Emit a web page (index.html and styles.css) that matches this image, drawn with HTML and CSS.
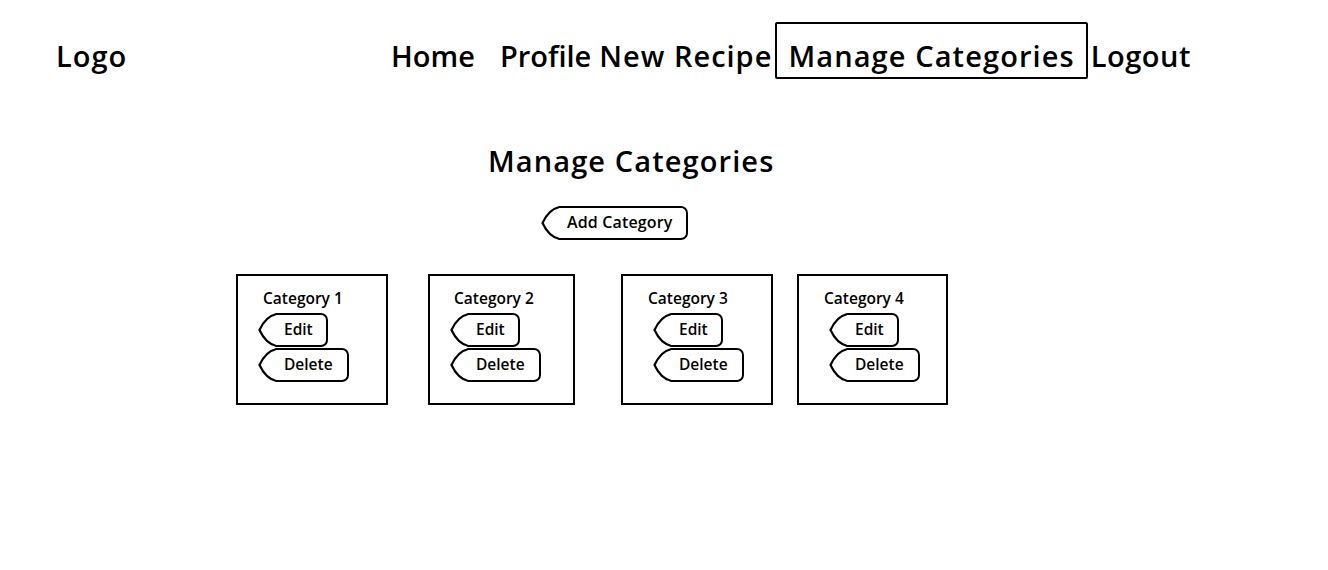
FILE: index.html
```html
<!DOCTYPE html>
<html>
<head>
<meta charset="utf-8">
<link rel="stylesheet" href="styles.css">
</head>
<body>
<header class="topbar">
  <div class="logo">Logo</div>
  <nav class="nav">
    <a class="nav-item home">Home</a>
    <a class="nav-item profile">Profile</a>
    <a class="nav-item recipe">New Recipe</a>
    <a class="nav-item active">Manage Categories</a>
    <a class="nav-item logout">Logout</a>
  </nav>
</header>
<main class="main">
  <h1 class="title">Manage Categories</h1>
  <div class="add-row">
    <button class="tag-btn big">
      <svg class="tip" viewBox="0 0 18 34" width="18" height="34"><path d="M19 1 Q8 3 1.5 17 Q8 31 19 33" fill="none" stroke="#000" stroke-width="2.2" stroke-linecap="round"/></svg>
      <span class="tag-body">Add Category</span>
    </button>
  </div>
  <section class="cards">
    <div class="card c1">
      <div class="card-name">Category 1</div>
      <button class="tag-btn"><svg class="tip" viewBox="0 0 18 34" width="18" height="34"><path d="M19 1 Q8 3 1.5 17 Q8 31 19 33" fill="none" stroke="#000" stroke-width="2.2" stroke-linecap="round"/></svg><span class="tag-body edit">Edit</span></button>
      <button class="tag-btn"><svg class="tip" viewBox="0 0 18 34" width="18" height="34"><path d="M19 1 Q8 3 1.5 17 Q8 31 19 33" fill="none" stroke="#000" stroke-width="2.2" stroke-linecap="round"/></svg><span class="tag-body del">Delete</span></button>
    </div>
    <div class="card c2">
      <div class="card-name">Category 2</div>
      <button class="tag-btn"><svg class="tip" viewBox="0 0 18 34" width="18" height="34"><path d="M19 1 Q8 3 1.5 17 Q8 31 19 33" fill="none" stroke="#000" stroke-width="2.2" stroke-linecap="round"/></svg><span class="tag-body edit">Edit</span></button>
      <button class="tag-btn"><svg class="tip" viewBox="0 0 18 34" width="18" height="34"><path d="M19 1 Q8 3 1.5 17 Q8 31 19 33" fill="none" stroke="#000" stroke-width="2.2" stroke-linecap="round"/></svg><span class="tag-body del">Delete</span></button>
    </div>
    <div class="card c3">
      <div class="card-name">Category 3</div>
      <button class="tag-btn"><svg class="tip" viewBox="0 0 18 34" width="18" height="34"><path d="M19 1 Q8 3 1.5 17 Q8 31 19 33" fill="none" stroke="#000" stroke-width="2.2" stroke-linecap="round"/></svg><span class="tag-body edit">Edit</span></button>
      <button class="tag-btn"><svg class="tip" viewBox="0 0 18 34" width="18" height="34"><path d="M19 1 Q8 3 1.5 17 Q8 31 19 33" fill="none" stroke="#000" stroke-width="2.2" stroke-linecap="round"/></svg><span class="tag-body del">Delete</span></button>
    </div>
    <div class="card c4">
      <div class="card-name">Category 4</div>
      <button class="tag-btn"><svg class="tip" viewBox="0 0 18 34" width="18" height="34"><path d="M19 1 Q8 3 1.5 17 Q8 31 19 33" fill="none" stroke="#000" stroke-width="2.2" stroke-linecap="round"/></svg><span class="tag-body edit">Edit</span></button>
      <button class="tag-btn"><svg class="tip" viewBox="0 0 18 34" width="18" height="34"><path d="M19 1 Q8 3 1.5 17 Q8 31 19 33" fill="none" stroke="#000" stroke-width="2.2" stroke-linecap="round"/></svg><span class="tag-body del">Delete</span></button>
    </div>
  </section>
</main>
</body>
</html>
```

FILE: styles.css
```css
* { box-sizing: border-box; }
body {
  margin: 0;
  background: #fff;
  color: #000;
  font-family: "Open Sans", "Liberation Sans", sans-serif;
  font-weight: 600;
}
.topbar {
  display: flex;
  align-items: flex-start;
  height: 57px;
  margin-top: 22px;
  padding-left: 56px;
}
.logo {
  font-size: 29px;
  line-height: 40px;
  padding-top: 14px;
  width: 335px;
  letter-spacing: 1px;
}
.nav {
  display: flex;
  align-items: flex-start;
  height: 57px;
}
.nav-item {
  font-size: 29px;
  line-height: 40px;
  padding-top: 14px;
  color: #000;
  text-decoration: none;
  margin-right: 3px;
  white-space: nowrap;
}
.nav-item.home { margin-right: 25px; }
.nav-item.profile { margin-right: 8px; }
.nav-item.recipe { letter-spacing: 1px; }
.nav-item.logout { letter-spacing: 0.5px; }
.nav-item.active {
  height: 57px;
  padding: 12px 11px 0 11px;
  border: 2px solid #000;
  border-radius: 2px;
  letter-spacing: 1.1px;
}
.main { display: flex; flex-direction: column; }
.title {
  margin: 64px 0 0 488px;
  font-size: 29px;
  font-weight: 600;
  line-height: 36px;
  letter-spacing: 1.1px;
}
.add-row {
  margin: 27px 0 0 541px;
}
.tag-btn {
  display: flex;
  align-items: stretch;
  height: 34px;
  padding: 0;
  margin: 0;
  border: none;
  background: transparent;
  font-family: inherit;
  font-weight: 600;
  color: #000;
  cursor: pointer;
}
.tip { display: block; flex: none; }
.tag-body {
  display: flex;
  align-items: center;
  border: 2.2px solid #000;
  border-left: none;
  border-radius: 0 7px 7px 0;
  font-size: 15.5px;
  padding: 0 10px 2px 8px;
}
.tag-body.edit { width: 52px; }
.tag-body.del { width: 73px; }
.big .tag-body { padding: 0 13px 2px 8px; font-size: 16px; letter-spacing: 0.15px; }
.cards {
  display: flex;
  margin: 34px 0 0 236px;
}
.card {
  width: 152px;
  height: 131px;
  border: 2.2px solid #000;
  padding: 12px 0 0 20px;
  display: flex;
  flex-direction: column;
}
.card-name {
  font-size: 15.5px;
  line-height: 20px;
  margin: 0 0 5px 5px;
}
.card .tag-btn + .tag-btn { margin-top: 1px; }
.c2 { width: 147px; margin-left: 40px; padding-left: 20px; }
.c2 .card-name { margin-left: 4px; }
.c3 { margin-left: 46px; padding-left: 30px; }
.c3 .card-name { margin-left: -5px; }
.c4 { width: 151px; margin-left: 24px; padding-left: 30px; }
.c4 .card-name { margin-left: -5px; }
```
